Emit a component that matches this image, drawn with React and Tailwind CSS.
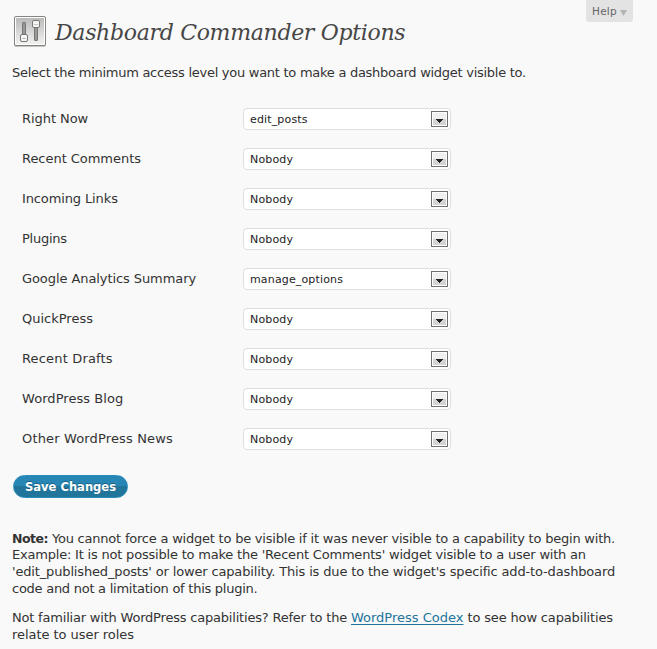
const rows = [
  ["Right Now", "edit_posts", "tracking-[-0.06px]"],
  ["Recent Comments", "Nobody", "tracking-[-0.04px]"],
  ["Incoming Links", "Nobody", "tracking-[-0.12px]"],
  ["Plugins", "Nobody", "tracking-[-0.24px]"],
  ["Google Analytics Summary", "manage_options", "tracking-[-0.08px]"],
  ["QuickPress", "Nobody", "tracking-normal"],
  ["Recent Drafts", "Nobody", "tracking-[0.17px]"],
  ["WordPress Blog", "Nobody", "tracking-[0.06px]"],
  ["Other WordPress News", "Nobody", "tracking-[0.15px]"],
];

function SettingsIcon() {
  return (
    <svg className="block shrink-0" width="34" height="34" viewBox="0 0 34 34" fill="none">
      <defs>
        <linearGradient id="panel" x1="0" y1="0" x2="0" y2="1">
          <stop offset="0" stopColor="#bababa" />
          <stop offset="1" stopColor="#f1f1f1" />
        </linearGradient>
      </defs>
      <rect x="1" y="3" width="32" height="30" rx="2" fill="#c4c4c2" />
      <rect x="1.5" y="2.5" width="31" height="29" rx="1.5" fill="#fff" stroke="#85857f" />
      <rect x="3" y="4" width="28" height="26" fill="url(#panel)" />
      <rect x="9.5" y="8.5" width="3" height="14" rx="0.5" fill="#999" stroke="#777772" />
      <rect x="21.5" y="11.5" width="3" height="15" rx="0.5" fill="#999" stroke="#777772" />
      <rect x="7.5" y="20.5" width="7" height="7" rx="1.5" fill="#f5f5f5" stroke="#777772" />
      <path d="M9 24.5h4" stroke="#c4c4c4" />
      <rect x="19.5" y="6.5" width="7" height="7" rx="1.5" fill="#f5f5f5" stroke="#777772" />
      <path d="M21 10.5h4" stroke="#c4c4c4" />
    </svg>
  );
}

function Select({ value }) {
  return (
    <div className="flex h-[22px] w-[208px] items-center justify-between rounded-[4px] border border-[#dfdfdf] bg-white pr-[2px] pl-[6px]">
      <span className="pt-[2px] text-[11px] leading-[18px] tracking-[0.15px] text-[#222]">{value}</span>
      <span className="flex h-[16px] w-[17px] items-center justify-center border border-[#707070] bg-white p-px">
        <span className="flex h-full w-full items-center justify-center bg-linear-to-b from-[#f0f0f0] from-50% to-[#d4d4d4] to-50%">
          <svg className="mt-[4px] block" width="7" height="4" viewBox="0 0 7 4" shapeRendering="crispEdges">
            <path d="M0 0h7v1H6v1H5v1H4v1H3V3H2V2H1V1H0z" fill="#222" />
          </svg>
        </span>
      </span>
    </div>
  );
}

export default function App() {
  return (
    <div className="h-[649px] w-[657px] overflow-hidden bg-[#f9f9f9] font-['DejaVu_Sans',sans-serif] text-[13px] text-[#333]">
      <header className="flex h-[64px] items-start justify-between pr-6 pl-[13px]">
        <div className="flex pt-[14px]">
          <SettingsIcon />
          <h1 className="ml-[8px] font-['DejaVu_Serif',serif] text-[22px] leading-[37px] tracking-[-0.31px] whitespace-nowrap text-[#464646] italic">
            Dashboard Commander Options
          </h1>
        </div>
        <button className="flex h-[22px] w-[47px] items-center gap-[3px] rounded-b-[3px] bg-[#e3e3e3] pl-[6px] text-[10.5px] text-[#666]">
          <span className="pt-px tracking-[0.25px]">Help</span>
          <svg className="mt-[3px] block" width="7" height="6" viewBox="0 0 7 6"><path d="M0 0h7L3.500 6z" fill="#b4b4b4" /></svg>
        </button>
      </header>
      <p className="pl-3 leading-[18px] tracking-[-0.27px] whitespace-nowrap">Select the minimum access level you want to make a dashboard widget visible to.</p>
      <div className="pt-[17px]">
        {rows.map(([label, value, tracking]) => (
          <div key={label} className="flex h-10 items-center pl-[22px]">
            <span className={`w-[221px] whitespace-nowrap ${tracking}`}>{label}</span>
            <Select value={value} />
          </div>
        ))}
      </div>
      <div className="pt-[16px] pl-[13px]">
        <button className="block h-[23px] w-[115px] rounded-full border border-[#298cba] bg-linear-to-b from-[#2786b3] from-50% to-[#21759b] to-50% pt-px text-[11.5px] leading-[21px] font-bold tracking-[0.03px] whitespace-nowrap text-white [text-shadow:0_-1px_0_rgba(0,0,0,0.3)]">Save Changes</button>
      </div>
      <div className="pt-[32px] pl-3 leading-[17px] whitespace-nowrap">
        <p className="tracking-[-0.215px]"><b className="text-[12.5px] tracking-[-0.5px]">Note:</b> You cannot force a widget to be visible if it was never visible to a capability to begin with.</p>
        <p className="-mt-px tracking-[-0.2px]">Example: It is not possible to make the 'Recent Comments' widget visible to a user with an</p>
        <p className="tracking-[-0.155px]">'edit_published_posts' or lower capability. This is due to the widget's specific add-to-dashboard</p>
        <p className="tracking-[-0.26px]">code and not a limitation of this plugin.</p>
        <p className="mt-[12px] tracking-[-0.15px]"><span className="tracking-[-0.2px]">Not familiar with WordPress capabilities? Refer to the </span><a className="tracking-normal text-[#21759b] underline underline-offset-2">WordPress Codex</a> to see how capabilities</p>
        <p className="tracking-[-0.05px]">relate to user roles</p>
      </div>
    </div>
  );
}
